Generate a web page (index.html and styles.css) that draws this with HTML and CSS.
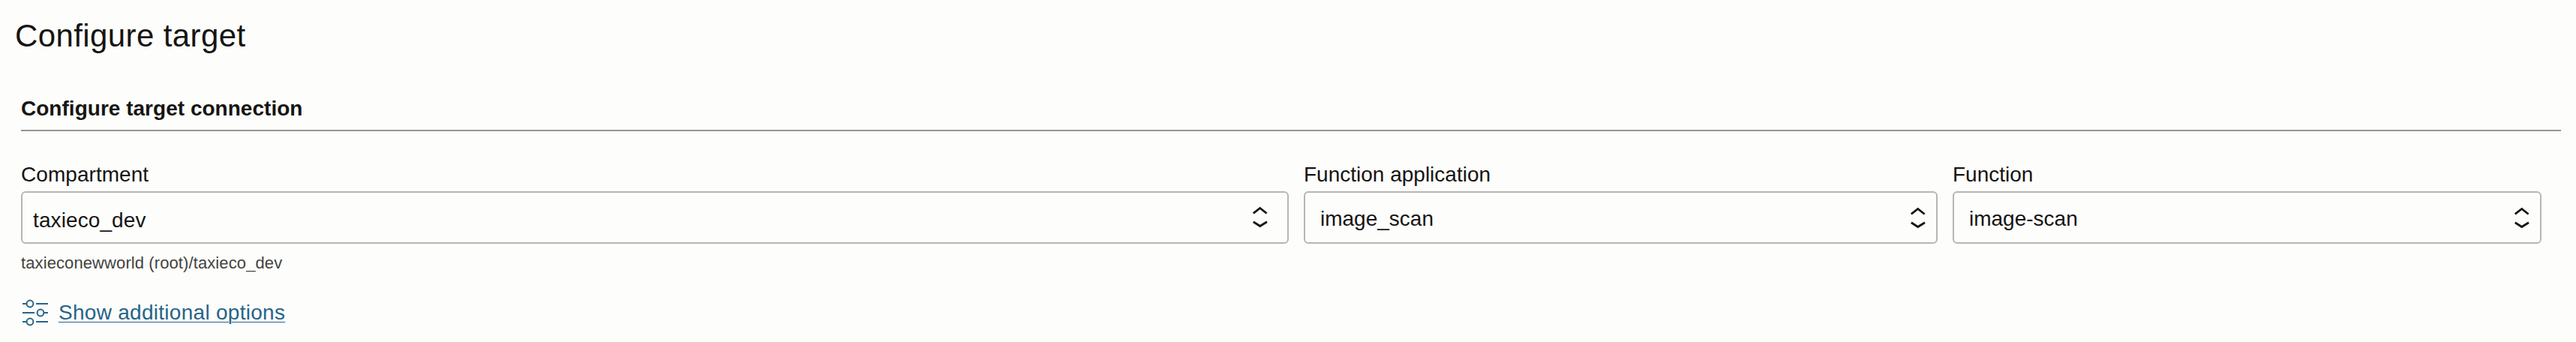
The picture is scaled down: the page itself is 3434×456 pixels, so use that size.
FILE: index.html
```html
<!DOCTYPE html>
<html lang="en">
<head>
<meta charset="utf-8">
<title>Configure target</title>
<link rel="stylesheet" href="styles.css">
</head>
<body>
<main class="page">
  <h1 class="title">Configure target</h1>
  <section class="panel">
    <h2 class="section-title">Configure target connection</h2>
    <div class="fields">
      <div class="field">
        <div class="label">Compartment</div>
        <div class="select select-compartment">
          <span class="value value-compartment">taxieco_dev</span>
          <svg class="arrows" viewBox="0 0 20 30"><path d="M.8 9.5 9.7 2.5 18.6 9.5M.8 20.8 9.7 26.5 19 20.8"/></svg>
        </div>
        <div class="hint">taxieconewworld (root)/taxieco_dev</div>
      </div>
      <div class="field">
        <div class="label label-plain">Function application</div>
        <div class="select">
          <span class="value">image_scan</span>
          <svg class="arrows" viewBox="0 0 20 30"><path d="M.8 9.5 9.7 2.5 18.6 9.5M.8 20.8 9.7 26.5 19 20.8"/></svg>
        </div>
      </div>
      <div class="field">
        <div class="label label-plain">Function</div>
        <div class="select">
          <span class="value">image-scan</span>
          <svg class="arrows" viewBox="0 0 20 30"><path d="M.8 9.5 9.7 2.5 18.6 9.5M.8 20.8 9.7 26.5 19 20.8"/></svg>
        </div>
      </div>
    </div>
    <a class="options" href="#">
      <svg class="sliders" viewBox="0 0 36 36"><path d="M1 6H6.5M19 6H35M1 18H17M29.5 18H35M1 30H6.5M19 30H35"/><circle cx="11" cy="6" r="4.4"/><circle cx="25" cy="18" r="4.4"/><circle cx="11" cy="30" r="4.4"/></svg>
      <span class="options-text">Show additional options</span>
    </a>
  </section>
</main>
</body>
</html>
```
FILE: styles.css
```css
* { box-sizing: border-box; }
body {
  margin: 0;
  background: #fdfdfb;
  color: #161513;
  font-family: "Liberation Sans", Arial, sans-serif;
  font-size: 28px;
  line-height: 32px;
}
.page { padding: 24px 20px 0; }
.title {
  margin: 0;
  font-size: 42px;
  font-weight: 400;
  line-height: 48px;
  letter-spacing: 0.4px;
}
.panel { padding: 57px 0 0 8px; }
.section-title {
  margin: 0;
  height: 46px;
  border-bottom: 2px solid #979593;
  font-size: 28px;
  font-weight: 700;
  line-height: 32px;
  letter-spacing: 0.02px;
}
.fields {
  display: grid;
  grid-template-columns: 1690px 845px 785px;
  column-gap: 20px;
  padding-top: 42px;
}
.label { height: 38px; letter-spacing: 0.05px; }
.label-plain { letter-spacing: 0; }
.select {
  display: flex;
  justify-content: space-between;
  align-items: flex-start;
  height: 70px;
  border: 2px solid #bab5b0;
  border-radius: 6px;
  padding: 19px 14px 0 20px;
}
.select-compartment { padding: 18px 26px 0 14px; }
.value { letter-spacing: 0; }
.value-compartment { padding-top: 3px; letter-spacing: 0.1px; }
.arrows {
  width: 20px;
  height: 30px;
  fill: none;
  stroke: #161513;
  stroke-width: 2.8;
}
.hint {
  margin-top: 13px;
  color: #444341;
  font-size: 22px;
  line-height: 25px;
  letter-spacing: 0.1px;
}
.options {
  display: flex;
  width: fit-content;
  gap: 13px;
  margin-top: 36px;
  color: #266489;
  text-decoration: none;
}
.sliders {
  width: 36px;
  height: 36px;
  margin-left: 1px;
  fill: none;
  stroke: #266489;
  stroke-width: 2;
}
.options-text {
  padding-top: 2px;
  letter-spacing: 0.28px;
  text-decoration: underline;
  text-decoration-thickness: 1px;
  text-underline-offset: 3px;
}
```
